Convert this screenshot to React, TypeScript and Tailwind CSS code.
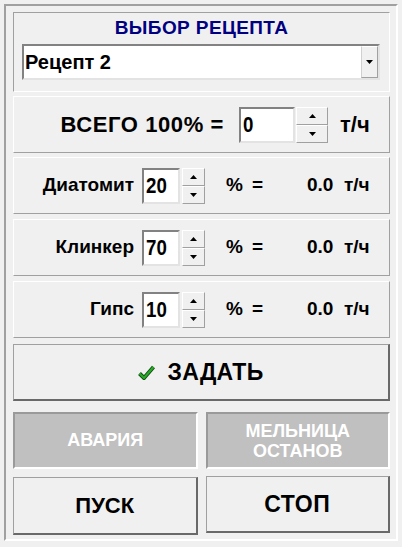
import React from "react";

const raised =
  "border-t border-l border-b border-r border-t-white border-l-white border-b-[#a0a0a0] border-r-[#a0a0a0]";

function Spinner({ big }: { big?: boolean }) {
  const w = big ? "w-[32px]" : "w-[23px]";
  return (
    <div className={`flex flex-col h-[36px] ${w}`}>
      {/* up half */}
      <div className="flex-1 flex items-center justify-center bg-[#f0f0f0] border border-t-white border-l-white border-b-[#a0a0a0] border-r-[#a0a0a0]">
        <svg width="7" height="4" viewBox="0 0 7 4">
          <path d="M3.5 0 L7 4 L0 4 Z" fill="#000" />
        </svg>
      </div>
      {/* down half */}
      <div className="flex-1 flex items-center justify-center bg-[#f0f0f0] border border-t-white border-l-white border-b-[#a0a0a0] border-r-[#a0a0a0]">
        <svg width="7" height="4" viewBox="0 0 7 4">
          <path d="M0 0 L7 0 L3.5 4 Z" fill="#000" />
        </svg>
      </div>
    </div>
  );
}

function NumBox({ value, w }: { value: string; w: string }) {
  return (
    <div
      className={`${w} h-[36px] bg-white border-2 border-t-[#828282] border-l-[#828282] border-b-[#e3e3e3] border-r-[#e3e3e3] flex items-center pl-[2px] overflow-hidden`}
    >
      <span className="inline-block text-[22px] font-bold text-black origin-left scale-x-[0.85]">{value}</span>
    </div>
  );
}

function Component({ label, value }: { label: string; value: string }) {
  return (
    <div className={`h-[57px] flex items-center ${raised}`}>
      <div className="w-[120px] text-right text-[19px] font-bold">{label}</div>
      <div className="ml-[8px]">
        <NumBox value={value} w="w-[38px]" />
      </div>
      <div className="ml-[2px]">
        <Spinner />
      </div>
      <div className="ml-[21px] w-[26px] text-[19px] font-bold">%</div>
      <div className="w-[55px] text-[19px] font-bold">=</div>
      <div className="w-[37px] text-[19px] font-bold">0.0</div>
      <div className="text-[19px] font-bold">т/ч</div>
    </div>
  );
}

export default function App() {
  return (
    <div className="w-[402px] h-[547px] bg-[#f0f0f0] pt-[4px] pl-[4px] font-['Liberation_Sans',Arial,sans-serif] text-black">
      <div className="w-[394px] h-[537px] border-2 border-t-[#a0a0a0] border-l-[#a0a0a0] border-b-white border-r-white pt-[6px] pl-[7px] pr-[6px]">
        {/* Recipe selection */}
        <div className="h-[80px] border border-t-[#a0a0a0] border-l-[#a0a0a0] border-b-white border-r-white pt-[4px]">
          <div className="text-center text-[19px] leading-[22px] font-bold text-[#000080] tracking-[0.4px]">
            ВЫБОР РЕЦЕПТА
          </div>
          <div className="mt-[5px] ml-[8px] w-[358px] h-[36px] bg-white border-2 border-t-[#828282] border-l-[#828282] border-b-[#e3e3e3] border-r-[#e3e3e3] flex">
            <div className="flex-1 flex items-center pl-[1px] text-[20px] font-bold">Рецепт 2</div>
            <div className="w-[17px] bg-[#f0f0f0] border border-t-white border-l-[#d0d0d0] border-b-[#a0a0a0] border-r-[#a0a0a0] flex items-center justify-center">
              <svg width="7" height="4" viewBox="0 0 7 4">
                <path d="M0 0 L7 0 L3.5 4 Z" fill="#000" />
              </svg>
            </div>
          </div>
        </div>

        {/* Total */}
        <div className={`mt-[4px] h-[57px] flex items-center ${raised}`}>
          <div className="w-[210px] text-right text-[22px] font-bold tracking-[0.6px]">ВСЕГО 100% =</div>
          <div className="ml-[15px]">
            <NumBox value="0" w="w-[56px]" />
          </div>
          <div className="ml-[1px]">
            <Spinner big />
          </div>
          <div className="ml-[12px] text-[22px] font-bold">т/ч</div>
        </div>

        <div className="mt-[4px]">
          <Component label="Диатомит" value="20" />
        </div>
        <div className="mt-[5px]">
          <Component label="Клинкер" value="70" />
        </div>
        <div className="mt-[5px]">
          <Component label="Гипс" value="10" />
        </div>

        {/* Set button */}
        <div className="mt-[6px] h-[57px] bg-[#f0f0f0] border-t border-l border-b-2 border-r-2 border-t-[#a0a0a0] border-l-[#a0a0a0] border-b-[#696969] border-r-[#696969] flex items-center justify-center gap-[12px]">
          <svg width="17" height="15" viewBox="0 0 17 15">
            <path d="M1.5 8.5 L6 13 L15.5 2" fill="none" stroke="#1a4a1a" strokeWidth="4" />
            <path d="M1.5 8.5 L6 13 L15.5 2" fill="none" stroke="#22b022" strokeWidth="2" />
          </svg>
          <span className="text-[23px] font-bold tracking-[0.3px]">ЗАДАТЬ</span>
        </div>

        {/* Status indicators */}
        <div className="mt-[11px] grid grid-cols-2 gap-[8px]">
          <div className="h-[57px] bg-[#c0c0c0] border-2 border-t-[#9a9a9a] border-l-[#9a9a9a] border-b-white border-r-white flex items-center justify-center text-white text-[18px] font-bold">
            АВАРИЯ
          </div>
          <div className="h-[57px] bg-[#c0c0c0] border-2 border-t-[#9a9a9a] border-l-[#9a9a9a] border-b-white border-r-white flex flex-col items-center justify-center text-white text-[18px] leading-[20px] font-bold text-center">
            <span>МЕЛЬНИЦА</span>
            <span>ОСТАНОВ</span>
          </div>
        </div>

        {/* Start / stop */}
        <div className="mt-[8px] grid grid-cols-2 gap-[8px]">
          <div className="h-[58px] bg-[#f0f0f0] border-t border-l border-b-2 border-r-2 border-t-[#a0a0a0] border-l-[#a0a0a0] border-b-[#696969] border-r-[#696969] flex items-center justify-center text-[22px] font-bold">
            ПУСК
          </div>
          <div className="h-[57px] -mt-[1px] bg-[#f0f0f0] border-t border-l border-b-2 border-r-2 border-t-[#a0a0a0] border-l-[#a0a0a0] border-b-[#696969] border-r-[#696969] flex items-center justify-center text-[23px] font-bold tracking-[0.5px]">
            СТОП
          </div>
        </div>
      </div>
    </div>
  );
}
